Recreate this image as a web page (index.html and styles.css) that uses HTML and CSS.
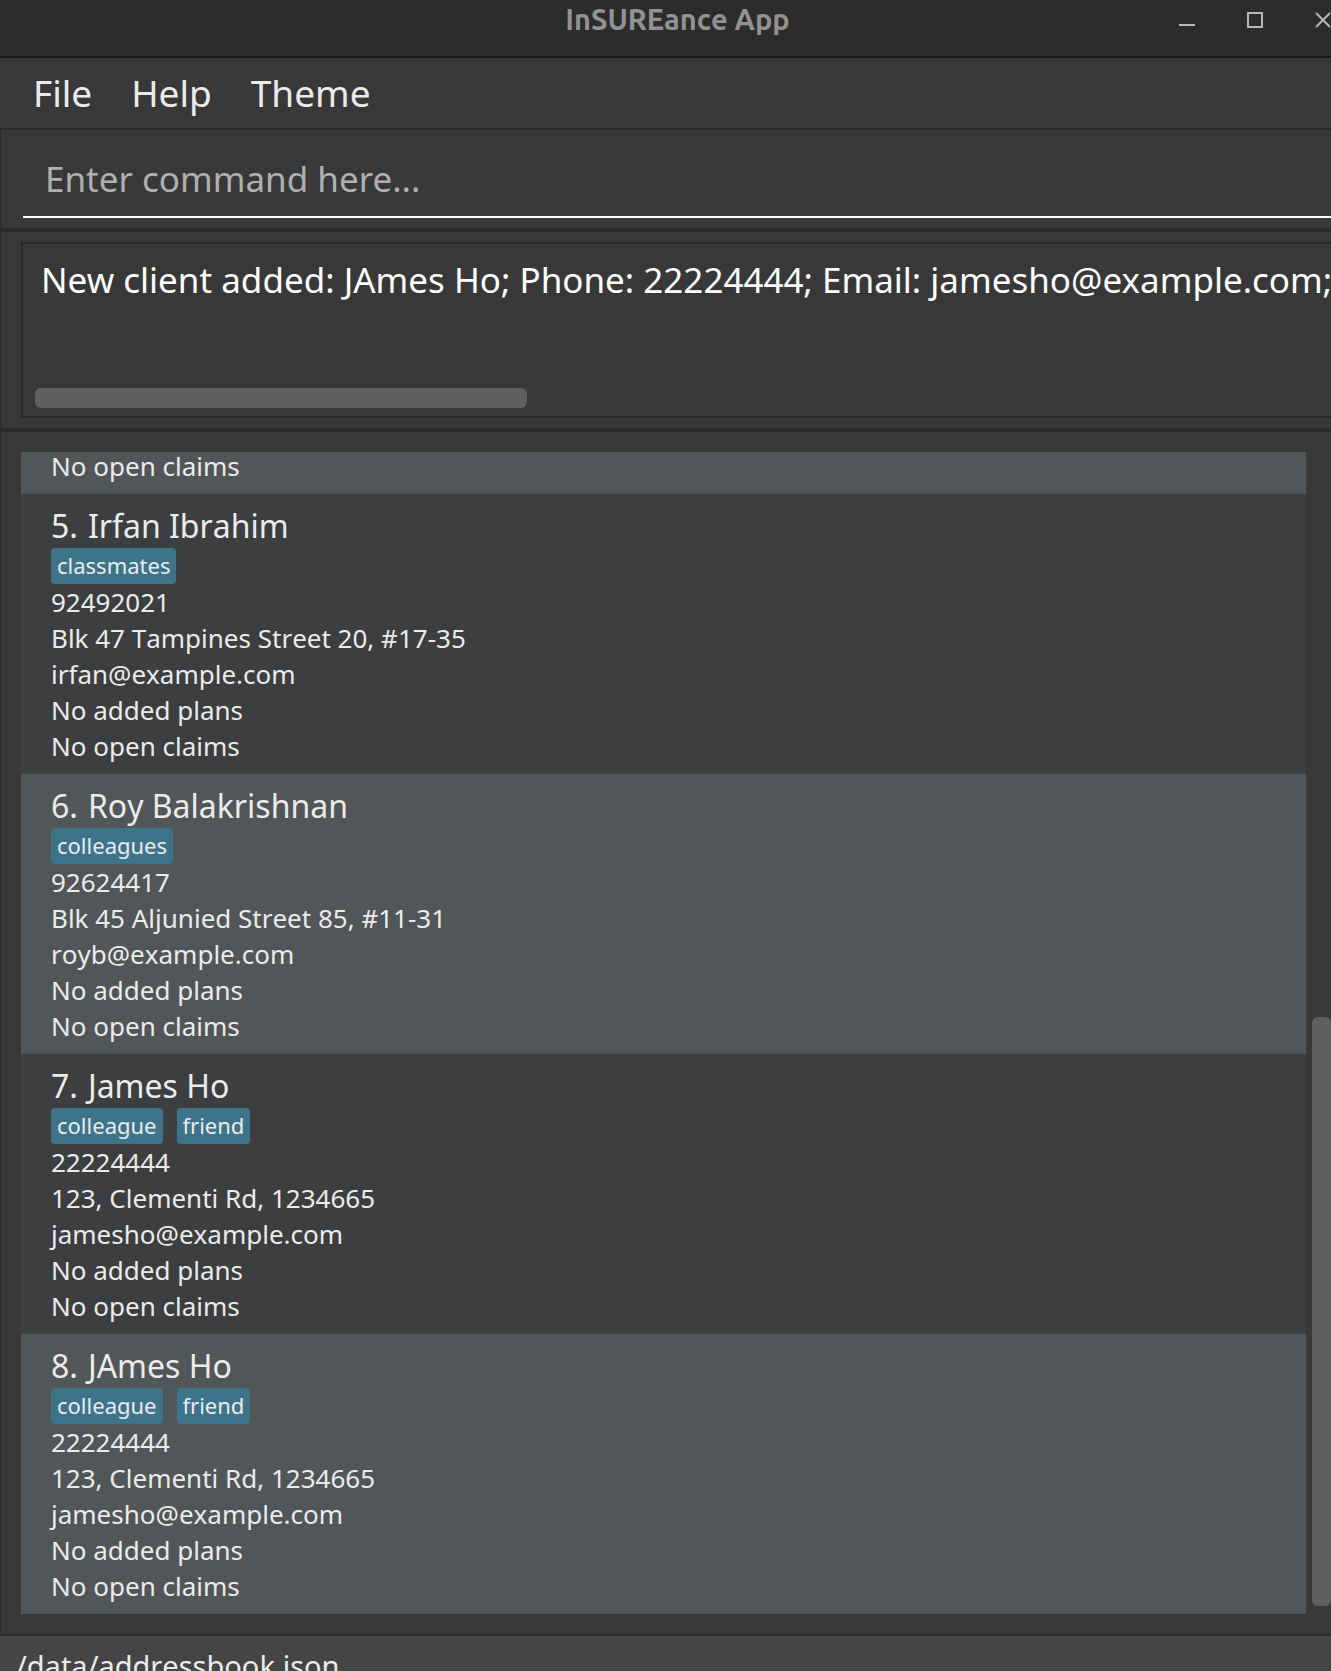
FILE: index.html
```
<!DOCTYPE html>
<html lang="en">
<head>
<meta charset="utf-8">
<title>InSUREance App</title>
<link rel="stylesheet" href="styles.css">
</head>
<body>
<div class="app">
  <header class="titlebar">
    <h1 class="title">InSUREance App</h1>
    <div class="window-controls">
      <button class="window-button" type="button" aria-label="Minimize"><svg width="16" height="16" viewBox="0 0 16 16"><path d="M0 13H16" stroke="currentColor" stroke-width="2"/></svg></button>
      <button class="window-button" type="button" aria-label="Maximize"><svg width="16" height="16" viewBox="0 0 16 16"><rect x="1" y="1" width="14" height="14" fill="none" stroke="currentColor" stroke-width="2"/></svg></button>
      <button class="window-button" type="button" aria-label="Close"><svg width="16" height="16" viewBox="0 0 16 16"><path d="M1 1L15 15M15 1L1 15" fill="none" stroke="currentColor" stroke-width="2"/></svg></button>
    </div>
  </header>
  <nav class="menubar">
    <button class="menu" type="button">File</button>
    <button class="menu" type="button">Help</button>
    <button class="menu" type="button">Theme</button>
  </nav>
  <section class="panel command-panel">
    <input class="command" type="text" aria-label="Command" placeholder="Enter command here...">
  </section>
  <section class="panel result-panel">
    <div class="result">
      <output class="result-text">New client added: JAmes Ho; Phone: 22224444; Email: jamesho@example.com;</output>
      <div class="track-x"><div class="thumb-x"></div></div>
    </div>
  </section>
  <main class="panel list-panel">
    <ul class="clients">
      <li class="client">
        <p class="detail">No open claims</p>
      </li>
      <li class="client">
        <h2 class="name"><span>5.</span> <span>Irfan Ibrahim</span></h2>
        <div class="tags"><span class="tag">classmates</span></div>
        <p class="detail">92492021</p>
        <p class="detail">Blk 47 Tampines Street 20, #17-35</p>
        <p class="detail">irfan@example.com</p>
        <p class="detail">No added plans</p>
        <p class="detail">No open claims</p>
      </li>
      <li class="client">
        <h2 class="name"><span>6.</span> <span>Roy Balakrishnan</span></h2>
        <div class="tags"><span class="tag">colleagues</span></div>
        <p class="detail">92624417</p>
        <p class="detail">Blk 45 Aljunied Street 85, #11-31</p>
        <p class="detail">royb@example.com</p>
        <p class="detail">No added plans</p>
        <p class="detail">No open claims</p>
      </li>
      <li class="client">
        <h2 class="name"><span>7.</span> <span>James Ho</span></h2>
        <div class="tags"><span class="tag">colleague</span><span class="tag">friend</span></div>
        <p class="detail">22224444</p>
        <p class="detail">123, Clementi Rd, 1234665</p>
        <p class="detail">jamesho@example.com</p>
        <p class="detail">No added plans</p>
        <p class="detail">No open claims</p>
      </li>
      <li class="client">
        <h2 class="name"><span>8.</span> <span>JAmes Ho</span></h2>
        <div class="tags"><span class="tag">colleague</span><span class="tag">friend</span></div>
        <p class="detail">22224444</p>
        <p class="detail">123, Clementi Rd, 1234665</p>
        <p class="detail">jamesho@example.com</p>
        <p class="detail">No added plans</p>
        <p class="detail">No open claims</p>
      </li>
    </ul>
    <div class="track-y"><div class="thumb-y"></div></div>
  </main>
  <footer class="statusbar">/data/addressbook.json</footer>
</div>
</body>
</html>
```
FILE: styles.css
```
* {
  box-sizing: border-box;
  margin: 0;
  padding: 0;
}

body {
  background: #383838;
  color: #ebebeb;
  font-family: "Noto Sans", "Open Sans", sans-serif;
  font-kerning: none;
  overflow: hidden;
}

.app {
  display: flex;
  flex-direction: column;
  height: 100vh;
  overflow: hidden;
}

.titlebar {
  display: flex;
  flex: none;
  align-items: flex-start;
  height: 58px;
  background: #2c2c2c;
  border-bottom: 2px solid #1a1a1a;
}

.title {
  flex: 1;
  padding-left: 176px;
  color: #929292;
  font-family: Ubuntu, "Noto Sans", sans-serif;
  font-size: 29px;
  font-weight: 600;
  line-height: 38px;
  text-align: center;
}

.window-controls {
  display: flex;
  gap: 52px;
  padding-top: 12px;
}

.window-button {
  width: 16px;
  height: 16px;
  border: 0;
  background: none;
  color: #b6b6b6;
}

.window-button svg {
  display: block;
}

.menubar {
  display: flex;
  flex: none;
  gap: 39px;
  height: 72px;
  padding-left: 33px;
  border-bottom: 2px solid #2a2a2a;
}

.menu {
  padding-bottom: 2px;
  border: 0;
  background: none;
  color: inherit;
  font: inherit;
  font-size: 37px;
}

.panel {
  flex: none;
  border-left: 1px solid #2a2a2a;
}

.command-panel {
  padding: 12px 0 10px 22px;
  border-bottom: 4px solid #2a2a2a;
}

.command {
  display: block;
  width: 100%;
  height: 76px;
  padding: 0 0 2px 22px;
  border: 0;
  border-bottom: 2px solid #fff;
  background: none;
  color: #fff;
  font: inherit;
  font-size: 35px;
  font-kerning: normal;
  outline: 0;
}

.command::placeholder {
  color: #b0b0b0;
  opacity: 1;
}

.result-panel {
  padding: 10px 0 10px 20px;
  border-bottom: 4px solid #2a2a2a;
}

.result {
  display: flex;
  flex-direction: column;
  justify-content: space-between;
  height: 176px;
  padding: 12px 0 8px 12px;
  border: 2px solid #2a2a2a;
  border-right: 0;
}

.result-text {
  padding-left: 6px;
  overflow: hidden;
  color: #fff;
  font-size: 35px;
  font-kerning: normal;
  line-height: 48px;
  white-space: nowrap;
}

.track-x {
  height: 20px;
}

.thumb-x {
  width: 38%;
  height: 20px;
  border-radius: 6px;
  background: #606060;
}

.list-panel {
  display: flex;
  flex: 1;
  gap: 6px;
  min-height: 0;
  padding: 20px 0 20px 20px;
}

.clients {
  display: flex;
  flex: 1;
  flex-direction: column;
  justify-content: flex-end;
  overflow: hidden;
  list-style: none;
}

.client {
  flex: none;
  padding: 10px 30px;
  background: #515658;
}

.client:nth-child(even) {
  background: #3c3e3f;
}

.name {
  display: flex;
  gap: 10px;
  font-size: 32px;
  font-weight: 400;
  line-height: 44px;
}

.tags {
  display: flex;
  gap: 14px;
}

.tag {
  padding: 0 6px 2px;
  border-radius: 4px;
  background: #3e7489;
  font-size: 22px;
  line-height: 34px;
}

.detail {
  font-size: 26px;
  line-height: 36px;
}

.track-y {
  display: flex;
  align-items: flex-end;
  width: 19px;
  padding-bottom: 8px;
}

.thumb-y {
  width: 100%;
  height: 51%;
  border-radius: 6px;
  background: #606060;
}

.statusbar {
  flex: none;
  height: 37px;
  padding: 8px 16px 0;
  overflow: hidden;
  border-top: 2px solid #2a2a2a;
  background: #454545;
  font-size: 29px;
  line-height: 44px;
}
```
